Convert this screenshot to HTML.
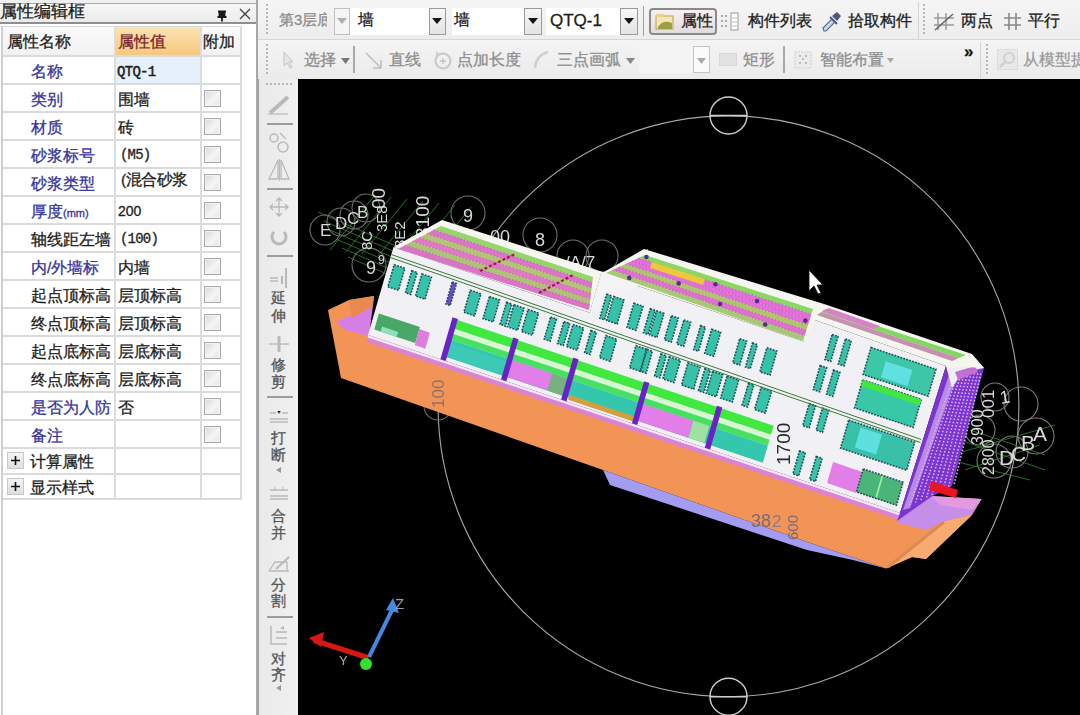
<!DOCTYPE html><html><head><meta charset="utf-8"><style>
*{box-sizing:border-box;margin:0;padding:0}
html,body{width:1080px;height:715px;overflow:hidden;background:#efefef;font-family:"Liberation Sans",sans-serif;}
.a{position:absolute}
.t{position:absolute;white-space:nowrap;line-height:1;-webkit-text-stroke:0.3px currentColor}
.cb{position:absolute;width:17px;height:17px;border:1px solid #a9a9a9;background:linear-gradient(135deg,#d6d6d6,#f6f6f6 55%,#e2e2e2);box-shadow:inset 0 0 0 1px #f2f2f2}
</style></head><body>
<div class="a" style="left:0;top:0;width:258px;height:715px;background:#fff"></div>
<div class="a" style="left:0;top:0;width:258px;height:4px;background:#f0f0f0"></div>
<div class="a" style="left:0;top:3px;width:258px;height:21px;background:linear-gradient(#f7f7f7,#ebebeb);border-top:1px solid #a8a8a8;border-bottom:2px solid #8e8e8e;border-right:1px solid #9a9a9a;border-radius:0 2px 0 0"></div>
<div class="t" style="left:0px;top:4px;font-size:16.8px;color:#1c1c1c">属性编辑框</div>
<svg class="a" style="left:216px;top:9px" width="12" height="13"><path d="M2 2.5h8M3.5 2.5v5.5M8.5 2.5v5.5M1.5 8h9M6 8v4.5" stroke="#1a1a1a" stroke-width="1.8" fill="none"/><rect x="4" y="3" width="4" height="5" fill="#1a1a1a"/></svg>
<svg class="a" style="left:238px;top:7px" width="14" height="14"><path d="M2 2L12 12M12 2L2 12" stroke="#444" stroke-width="1.4"/></svg>
<div class="a" style="left:256px;top:0;width:2px;height:715px;background:#a7a7a7"></div>
<div class="a" style="left:1px;top:26px;width:2px;height:689px;background:#cfcfcf"></div>
<div class="a" style="left:3px;top:26px;width:239px;height:31px;background:linear-gradient(#fafafa,#f1f1f1)"></div>
<div class="a" style="left:115px;top:27px;width:86px;height:29px;background:linear-gradient(#fbe3b0,#f6c77e)"></div>
<div class="t" style="left:7px;top:34px;font-size:15.5px;color:#1e1e1e">属性名称</div>
<div class="t" style="left:118px;top:34px;font-size:15.5px;color:#7a1f2e">属性值</div>
<div class="t" style="left:203px;top:34px;font-size:15.5px;color:#1e1e1e">附加</div>
<div class="a" style="left:3px;top:26px;width:239px;height:1px;background:#d8d8d8"></div>
<div class="a" style="left:115px;top:57px;width:86px;height:27px;background:#e5f0fa"></div>
<div class="t" style="left:31px;top:64px;font-size:15.5px;color:#35349b">名称</div>
<div class="t" style="left:117px;top:65px;font-family:'Liberation Mono',monospace;font-size:14px;color:#1e1e1e;letter-spacing:-0.7px;-webkit-text-stroke:0.5px #1e1e1e">QTQ-1</div>
<div class="t" style="left:31px;top:92px;font-size:15.5px;color:#35349b">类别</div>
<div class="t" style="left:118px;top:92px;font-size:15.5px;color:#1e1e1e">围墙</div>
<div class="cb" style="left:204px;top:90px"></div>
<div class="t" style="left:31px;top:120px;font-size:15.5px;color:#35349b">材质</div>
<div class="t" style="left:118px;top:120px;font-size:15.5px;color:#1e1e1e">砖</div>
<div class="cb" style="left:204px;top:118px"></div>
<div class="t" style="left:31px;top:148px;font-size:15.5px;color:#35349b">砂浆标号</div>
<div class="t" style="left:120px;top:148px;font-family:'Liberation Mono',monospace;font-size:14px;letter-spacing:-0.8px;color:#1e1e1e">(M5)</div>
<div class="cb" style="left:204px;top:146px"></div>
<div class="t" style="left:31px;top:176px;font-size:15.5px;color:#35349b">砂浆类型</div>
<div class="t" style="left:121px;top:172px;font-size:15.5px;color:#1e1e1e;letter-spacing:-0.5px">(混合砂浆</div>
<div class="cb" style="left:204px;top:174px"></div>
<div class="t" style="left:31px;top:204px;font-size:15.5px;color:#35349b">厚度<span style="font-size:11px">(mm)</span></div>
<div class="t" style="left:118px;top:204px;font-size:14px;color:#1e1e1e">200</div>
<div class="cb" style="left:204px;top:202px"></div>
<div class="t" style="left:31px;top:232px;font-size:15.5px;color:#1e1e1e">轴线距左墙</div>
<div class="t" style="left:120px;top:232px;font-family:'Liberation Mono',monospace;font-size:14px;letter-spacing:-0.8px;color:#1e1e1e">(100)</div>
<div class="cb" style="left:204px;top:230px"></div>
<div class="t" style="left:31px;top:260px;font-size:15.5px;color:#35349b">内/外墙标</div>
<div class="t" style="left:118px;top:260px;font-size:15.5px;color:#1e1e1e">内墙</div>
<div class="cb" style="left:204px;top:258px"></div>
<div class="t" style="left:31px;top:288px;font-size:15.5px;color:#1e1e1e">起点顶标高</div>
<div class="t" style="left:118px;top:288px;font-size:15.5px;color:#1e1e1e">层顶标高</div>
<div class="cb" style="left:204px;top:286px"></div>
<div class="t" style="left:31px;top:316px;font-size:15.5px;color:#1e1e1e">终点顶标高</div>
<div class="t" style="left:118px;top:316px;font-size:15.5px;color:#1e1e1e">层顶标高</div>
<div class="cb" style="left:204px;top:314px"></div>
<div class="t" style="left:31px;top:344px;font-size:15.5px;color:#1e1e1e">起点底标高</div>
<div class="t" style="left:118px;top:344px;font-size:15.5px;color:#1e1e1e">层底标高</div>
<div class="cb" style="left:204px;top:342px"></div>
<div class="t" style="left:31px;top:372px;font-size:15.5px;color:#1e1e1e">终点底标高</div>
<div class="t" style="left:118px;top:372px;font-size:15.5px;color:#1e1e1e">层底标高</div>
<div class="cb" style="left:204px;top:370px"></div>
<div class="t" style="left:31px;top:400px;font-size:15.5px;color:#35349b">是否为人防</div>
<div class="t" style="left:118px;top:400px;font-size:15.5px;color:#1e1e1e">否</div>
<div class="cb" style="left:204px;top:398px"></div>
<div class="t" style="left:31px;top:428px;font-size:15.5px;color:#35349b">备注</div>
<div class="t" style="left:118px;top:428px;font-size:15.5px;color:#1e1e1e"></div>
<div class="cb" style="left:204px;top:426px"></div>
<div class="a" style="left:7px;top:452px;width:17px;height:17px;border:1px solid #c8c8c8;background:linear-gradient(#f4f4f4,#dedede)"></div>
<svg class="a" style="left:9px;top:454px" width="13" height="13"><path d="M6.5 2v9M2 6.5h9" stroke="#111" stroke-width="1.6"/></svg>
<div class="t" style="left:30px;top:454px;font-size:15.5px;color:#1e1e1e">计算属性</div>
<div class="a" style="left:7px;top:477.5px;width:17px;height:17px;border:1px solid #c8c8c8;background:linear-gradient(#f4f4f4,#dedede)"></div>
<svg class="a" style="left:9px;top:479.5px" width="13" height="13"><path d="M6.5 2v9M2 6.5h9" stroke="#111" stroke-width="1.6"/></svg>
<div class="t" style="left:30px;top:479.5px;font-size:15.5px;color:#1e1e1e">显示样式</div>
<div class="a" style="left:3px;top:55px;width:239px;height:2px;background:#dadada"></div>
<div class="a" style="left:3px;top:83px;width:239px;height:2px;background:#dadada"></div>
<div class="a" style="left:3px;top:111px;width:239px;height:2px;background:#dadada"></div>
<div class="a" style="left:3px;top:139px;width:239px;height:2px;background:#dadada"></div>
<div class="a" style="left:3px;top:167px;width:239px;height:2px;background:#dadada"></div>
<div class="a" style="left:3px;top:195px;width:239px;height:2px;background:#dadada"></div>
<div class="a" style="left:3px;top:223px;width:239px;height:2px;background:#dadada"></div>
<div class="a" style="left:3px;top:251px;width:239px;height:2px;background:#dadada"></div>
<div class="a" style="left:3px;top:279px;width:239px;height:2px;background:#dadada"></div>
<div class="a" style="left:3px;top:307px;width:239px;height:2px;background:#dadada"></div>
<div class="a" style="left:3px;top:335px;width:239px;height:2px;background:#dadada"></div>
<div class="a" style="left:3px;top:363px;width:239px;height:2px;background:#dadada"></div>
<div class="a" style="left:3px;top:391px;width:239px;height:2px;background:#dadada"></div>
<div class="a" style="left:3px;top:419px;width:239px;height:2px;background:#dadada"></div>
<div class="a" style="left:3px;top:447px;width:239px;height:2px;background:#dadada"></div>
<div class="a" style="left:3px;top:472.5px;width:239px;height:2px;background:#dadada"></div>
<div class="a" style="left:3px;top:498.0px;width:239px;height:2px;background:#dadada"></div>
<div class="a" style="left:114px;top:26px;width:2px;height:473px;background:#dcdcdc"></div>
<div class="a" style="left:200px;top:26px;width:2px;height:473px;background:#dcdcdc"></div>
<div class="a" style="left:240px;top:26px;width:2px;height:473px;background:#dcdcdc"></div>
<div class="a" style="left:258px;top:0;width:822px;height:40px;background:linear-gradient(#f5f5f5,#ededed)"></div>
<div class="a" style="left:258px;top:39px;width:822px;height:1px;background:#d6d6d6"></div>
<div class="a" style="left:258px;top:40px;width:822px;height:39px;background:linear-gradient(#f4f4f4,#ebebeb)"></div>
<div class="a" style="left:266px;top:4px;width:2px;height:2px;background:#b8b8b8"></div><div class="a" style="left:266px;top:8px;width:2px;height:2px;background:#b8b8b8"></div><div class="a" style="left:266px;top:12px;width:2px;height:2px;background:#b8b8b8"></div><div class="a" style="left:266px;top:16px;width:2px;height:2px;background:#b8b8b8"></div><div class="a" style="left:266px;top:20px;width:2px;height:2px;background:#b8b8b8"></div><div class="a" style="left:266px;top:24px;width:2px;height:2px;background:#b8b8b8"></div><div class="a" style="left:266px;top:28px;width:2px;height:2px;background:#b8b8b8"></div><div class="a" style="left:266px;top:32px;width:2px;height:2px;background:#b8b8b8"></div>
<div class="a" style="left:266px;top:44px;width:2px;height:2px;background:#b8b8b8"></div><div class="a" style="left:266px;top:48px;width:2px;height:2px;background:#b8b8b8"></div><div class="a" style="left:266px;top:52px;width:2px;height:2px;background:#b8b8b8"></div><div class="a" style="left:266px;top:56px;width:2px;height:2px;background:#b8b8b8"></div><div class="a" style="left:266px;top:60px;width:2px;height:2px;background:#b8b8b8"></div><div class="a" style="left:266px;top:64px;width:2px;height:2px;background:#b8b8b8"></div><div class="a" style="left:266px;top:68px;width:2px;height:2px;background:#b8b8b8"></div><div class="a" style="left:266px;top:72px;width:2px;height:2px;background:#b8b8b8"></div>
<div class="a" style="left:923px;top:4px;width:2px;height:2px;background:#b8b8b8"></div><div class="a" style="left:923px;top:8px;width:2px;height:2px;background:#b8b8b8"></div><div class="a" style="left:923px;top:12px;width:2px;height:2px;background:#b8b8b8"></div><div class="a" style="left:923px;top:16px;width:2px;height:2px;background:#b8b8b8"></div><div class="a" style="left:923px;top:20px;width:2px;height:2px;background:#b8b8b8"></div><div class="a" style="left:923px;top:24px;width:2px;height:2px;background:#b8b8b8"></div><div class="a" style="left:923px;top:28px;width:2px;height:2px;background:#b8b8b8"></div><div class="a" style="left:923px;top:32px;width:2px;height:2px;background:#b8b8b8"></div>
<div class="a" style="left:986px;top:44px;width:2px;height:2px;background:#b8b8b8"></div><div class="a" style="left:986px;top:48px;width:2px;height:2px;background:#b8b8b8"></div><div class="a" style="left:986px;top:52px;width:2px;height:2px;background:#b8b8b8"></div><div class="a" style="left:986px;top:56px;width:2px;height:2px;background:#b8b8b8"></div><div class="a" style="left:986px;top:60px;width:2px;height:2px;background:#b8b8b8"></div><div class="a" style="left:986px;top:64px;width:2px;height:2px;background:#b8b8b8"></div><div class="a" style="left:986px;top:68px;width:2px;height:2px;background:#b8b8b8"></div><div class="a" style="left:986px;top:72px;width:2px;height:2px;background:#b8b8b8"></div>
<div class="t" style="left:279px;top:12px;font-size:15px;color:#8c8c8c">第3层底</div>
<div class="a" style="left:327px;top:8px;width:6px;height:26px;background:linear-gradient(#f3f3f3,#ececec)"></div>
<div class="a" style="left:334px;top:8px;width:16px;height:27px;border:1px solid #c0c0c0;background:#f4f4f4"></div>
<svg class="a" style="left:337px;top:18px" width="10" height="6"><path d="M0 0h10L5 6z" fill="#b0b0b0"/></svg>
<div class="a" style="left:350px;top:8px;width:80px;height:27px;background:#fff"></div>
<div class="t" style="left:358px;top:12px;font-size:15.5px;color:#1c1c1c">墙</div>
<div class="a" style="left:429px;top:8px;width:17px;height:27px;border:1px solid #9a9a9a;background:linear-gradient(#f7f7f7,#e3e3e3)"></div>
<svg class="a" style="left:432px;top:18px" width="10" height="6"><path d="M0 0h10L5 6z" fill="#111"/></svg>
<div class="a" style="left:452px;top:8px;width:73px;height:27px;background:#fff"></div>
<div class="t" style="left:454px;top:12px;font-size:15.5px;color:#1c1c1c">墙</div>
<div class="a" style="left:524px;top:8px;width:18px;height:27px;border:1px solid #9a9a9a;background:linear-gradient(#f7f7f7,#e3e3e3)"></div>
<svg class="a" style="left:528px;top:18px" width="10" height="6"><path d="M0 0h10L5 6z" fill="#111"/></svg>
<div class="a" style="left:546px;top:8px;width:75px;height:27px;background:#fff"></div>
<div class="t" style="left:550px;top:12px;font-size:17px;color:#1c1c1c">QTQ-1</div>
<div class="a" style="left:620px;top:8px;width:18px;height:27px;border:1px solid #9a9a9a;background:linear-gradient(#f7f7f7,#e3e3e3)"></div>
<svg class="a" style="left:624px;top:18px" width="10" height="6"><path d="M0 0h10L5 6z" fill="#111"/></svg>
<div class="a" style="left:643px;top:6px;width:1px;height:30px;background:#a0a0a0"></div>
<div class="a" style="left:649px;top:8px;width:68px;height:27px;border:2px solid #8a8a8a;border-radius:4px;background:linear-gradient(#f6f0f0,#e2dcdc)"></div>
<svg class="a" style="left:655px;top:13px" width="20" height="18"><rect x="1" y="3" width="17" height="13" fill="#f3e6b0" stroke="#b8a060"/><path d="M3 14 Q8 6 17 10 L17 16 L3 16z" fill="#9aa040"/><rect x="1" y="1" width="8" height="3" fill="#e8d090"/></svg>
<div class="t" style="left:681px;top:13px;font-size:15.5px;color:#1c1c1c">属性</div>
<svg class="a" style="left:720px;top:12px" width="20" height="20"><g fill="#aaa"><rect x="1" y="3" width="2" height="2"/><rect x="1" y="8" width="2" height="2"/><rect x="1" y="13" width="2" height="2"/><rect x="5" y="3" width="2" height="2"/><rect x="5" y="8" width="2" height="2"/><rect x="5" y="13" width="2" height="2"/></g><rect x="11" y="1" width="7" height="17" fill="#fff" stroke="#999"/><path d="M12 6h5M12 10h5M12 14h5" stroke="#bbb"/></svg>
<div class="t" style="left:748px;top:13px;font-size:15.5px;color:#1c1c1c">构件列表</div>
<svg class="a" style="left:821px;top:11px" width="21" height="22"><path d="M3 20 L2 17 L11 8 L14 11 L5 20z" fill="#c8dcf0" stroke="#5a6e90" stroke-width="1.2"/><path d="M11 5 L16 1 L20 5 L16 10z" fill="#4a5a7a"/><path d="M9 6l7 7" stroke="#4a5a7a" stroke-width="2"/></svg>
<div class="t" style="left:848px;top:13px;font-size:15.5px;color:#1c1c1c">拾取构件</div>
<div class="a" style="left:918px;top:2px;width:1px;height:37px;background:#d4d4d4"></div>
<svg class="a" style="left:933px;top:12px" width="22" height="19"><path d="M5 1v17M13 1v17M1 6h20M1 13h20" stroke="#999" stroke-width="1.5"/><path d="M2 18 L20 2" stroke="#666" stroke-width="1.5"/></svg>
<div class="t" style="left:961px;top:13px;font-size:15.5px;color:#1c1c1c">两点</div>
<svg class="a" style="left:1003px;top:12px" width="19" height="19"><path d="M6 1v17M13 1v17M1 6h17M1 13h17" stroke="#888" stroke-width="1.6"/></svg>
<div class="t" style="left:1028px;top:13px;font-size:15.5px;color:#1c1c1c">平行</div>
<svg class="a" style="left:282px;top:51px" width="12" height="18"><path d="M2 1 L2 15 L5 12 L8 17 L10 16 L7 11 L11 11z" fill="#e4e4e4" stroke="#c4c4c4"/></svg>
<div class="t" style="left:304px;top:52px;font-size:15.5px;color:#8e8e8e">选择</div>
<svg class="a" style="left:341px;top:58px" width="10" height="6"><path d="M0 0h9L4.5 6z" fill="#777"/></svg>
<div class="a" style="left:353px;top:46px;width:2px;height:27px;background:#a9a9a9"></div>
<svg class="a" style="left:364px;top:51px" width="20" height="19"><path d="M2 2 L17 17 M17 9 L17 17 L9 17" stroke="#bdbdbd" stroke-width="1.5" fill="none"/></svg>
<div class="t" style="left:389px;top:52px;font-size:15.5px;color:#8e8e8e">直线</div>
<svg class="a" style="left:432px;top:49px" width="21" height="21"><circle cx="11" cy="12" r="7.5" stroke="#c8c8c8" stroke-width="2" fill="none"/><path d="M11 9v6M8 12h6" stroke="#c0c0c0" stroke-width="1.3"/><path d="M4 2 L9 6 L4 8z" fill="#cfcfcf"/></svg>
<div class="t" style="left:457px;top:52px;font-size:15.5px;color:#8e8e8e">点加长度</div>
<svg class="a" style="left:532px;top:49px" width="18" height="20"><path d="M3 19 Q4 6 16 3" stroke="#cfcfcf" stroke-width="2.5" fill="none"/></svg>
<div class="t" style="left:557px;top:52px;font-size:15.5px;color:#8e8e8e">三点画弧</div>
<svg class="a" style="left:626px;top:58px" width="10" height="6"><path d="M0 0h9L4.5 6z" fill="#888"/></svg>
<div class="a" style="left:639px;top:46px;width:54px;height:27px;background:#f4f4f4"></div>
<div class="a" style="left:693px;top:46px;width:17px;height:27px;border:1px solid #c4c4c4;background:#fafafa"></div>
<svg class="a" style="left:697px;top:58px" width="10" height="6"><path d="M0 0h9L4.5 6z" fill="#aaa"/></svg>
<div class="a" style="left:719px;top:53px;width:18px;height:13px;background:#e2e2e2;border:1px solid #d8d8d8"></div>
<div class="t" style="left:743px;top:52px;font-size:15.5px;color:#8e8e8e">矩形</div>
<div class="a" style="left:783px;top:46px;width:2px;height:27px;background:#a9a9a9"></div>
<svg class="a" style="left:794px;top:51px" width="18" height="18"><rect x="1" y="1" width="16" height="16" fill="#ececec" stroke="#cfcfcf" stroke-dasharray="2 1"/><path d="M5 5h2M11 5h2M5 12h2M11 12h2M8 8h2" stroke="#bbb" stroke-width="2"/></svg>
<div class="t" style="left:820px;top:52px;font-size:15.5px;color:#8e8e8e">智能布置</div>
<svg class="a" style="left:887px;top:58px" width="8" height="5"><path d="M0 0h7L3.5 5z" fill="#aaa"/></svg>
<div class="t" style="left:964px;top:43px;font-size:17px;font-weight:bold;color:#111">»</div>
<div class="a" style="left:980px;top:42px;width:1px;height:36px;background:#d4d4d4"></div>
<svg class="a" style="left:997px;top:49px" width="21" height="21"><rect x="0.5" y="0.5" width="20" height="20" fill="#e8e8e8" stroke="#dcdcdc"/><circle cx="12" cy="9" r="5" stroke="#d0d0d0" stroke-width="2" fill="none"/><path d="M8 13 L3 18" stroke="#d0d0d0" stroke-width="2.5"/></svg>
<div class="t" style="left:1023px;top:52px;font-size:15.5px;color:#9a9a9a">从模型提</div>
<div class="a" style="left:258px;top:79px;width:40px;height:636px;background:linear-gradient(90deg,#e9e9e9,#f0f0f0)"></div>
<div class="a" style="left:258px;top:79px;width:1px;height:636px;background:#9c9c9c"></div>
<div class="a" style="left:266px;top:83px;width:2px;height:2px;background:#b8b8b8"></div><div class="a" style="left:270px;top:83px;width:2px;height:2px;background:#b8b8b8"></div><div class="a" style="left:274px;top:83px;width:2px;height:2px;background:#b8b8b8"></div><div class="a" style="left:278px;top:83px;width:2px;height:2px;background:#b8b8b8"></div><div class="a" style="left:282px;top:83px;width:2px;height:2px;background:#b8b8b8"></div><div class="a" style="left:286px;top:83px;width:2px;height:2px;background:#b8b8b8"></div><div class="a" style="left:290px;top:83px;width:2px;height:2px;background:#b8b8b8"></div>
<div class="a" style="left:267px;top:123px;width:26px;height:2px;background:#9c9c9c"></div>
<div class="a" style="left:267px;top:188px;width:26px;height:2px;background:#9c9c9c"></div>
<div class="a" style="left:267px;top:255px;width:26px;height:2px;background:#9c9c9c"></div>
<div class="a" style="left:267px;top:396px;width:26px;height:2px;background:#9c9c9c"></div>
<div class="a" style="left:267px;top:616px;width:26px;height:2px;background:#9c9c9c"></div>
<svg class="a" style="left:266px;top:92px" width="26" height="24"><path d="M4 21 L22 5" stroke="#b9b9b9" stroke-width="4"/><path d="M2 22h20" stroke="#b9b9b9" stroke-width="1.2"/></svg>
<svg class="a" style="left:266px;top:130px" width="26" height="24"><circle cx="8" cy="8" r="4" stroke="#b9b9b9" stroke-width="1.5" fill="none"/><circle cx="17" cy="17" r="5" stroke="#b9b9b9" stroke-width="1.5" fill="none"/><path d="M14 3 L20 9" stroke="#b9b9b9" stroke-width="1.2"/></svg>
<svg class="a" style="left:266px;top:158px" width="26" height="24"><path d="M12 2 L3 21 L12 21z M15 2 L23 21 L15 21z" stroke="#b9b9b9" stroke-width="1.3" fill="none"/><path d="M13.5 1v22" stroke="#b9b9b9"/></svg>
<svg class="a" style="left:268px;top:197px" width="22" height="20"><path d="M11 1v18M2 10h18M8 4l3-3 3 3M8 16l3 3 3-3M5 7l-3 3 3 3M17 7l3 3-3 3" stroke="#b9b9b9" stroke-width="1.3" fill="none"/></svg>
<svg class="a" style="left:268px;top:227px" width="22" height="20"><path d="M6 5 A7 7 0 1 0 16 5" stroke="#b9b9b9" stroke-width="3" fill="none"/></svg>
<svg class="a" style="left:267px;top:266px" width="24" height="22"><path d="M3 12h8M3 15h8" stroke="#b9b9b9" stroke-width="1.4"/><path d="M15 10v8M19 2v20" stroke="#b9b9b9" stroke-width="2"/></svg>
<div class="t" style="left:271px;top:290px;font-size:15px;color:#555">延</div>
<div class="t" style="left:271px;top:308px;font-size:15px;color:#555">伸</div>
<svg class="a" style="left:267px;top:335px" width="24" height="18"><path d="M2 9h20" stroke="#b9b9b9" stroke-width="1.4"/><path d="M12 1v16" stroke="#b9b9b9" stroke-width="3"/></svg>
<div class="t" style="left:271px;top:357px;font-size:15px;color:#555">修</div>
<div class="t" style="left:271px;top:374px;font-size:15px;color:#555">剪</div>
<svg class="a" style="left:267px;top:407px" width="24" height="18"><path d="M3 6h6M15 6h6M3 12h18M3 15h18" stroke="#b9b9b9" stroke-width="1.5"/><path d="M10 4 L12 7 L14 4" stroke="#b9b9b9"/></svg>
<div class="t" style="left:271px;top:430px;font-size:15px;color:#555">打</div>
<div class="t" style="left:271px;top:447px;font-size:15px;color:#555">断</div>
<svg class="a" style="left:276px;top:467px" width="6" height="6"><path d="M5 0v6L0 3z" fill="#999"/></svg>
<svg class="a" style="left:267px;top:485px" width="24" height="18"><path d="M3 5h18M3 11h18M3 14h18" stroke="#b9b9b9" stroke-width="1.5"/><path d="M8 2v4M16 2v4" stroke="#b9b9b9"/></svg>
<div class="t" style="left:271px;top:508px;font-size:15px;color:#555">合</div>
<div class="t" style="left:271px;top:525px;font-size:15px;color:#555">并</div>
<svg class="a" style="left:266px;top:554px" width="26" height="20"><path d="M3 17 L9 8 L21 8 L21 17 M3 17h20" stroke="#b9b9b9" stroke-width="1.3" fill="none"/><path d="M10 15 L23 3" stroke="#b9b9b9" stroke-width="2"/></svg>
<div class="t" style="left:271px;top:577px;font-size:15px;color:#555">分</div>
<div class="t" style="left:271px;top:593px;font-size:15px;color:#555">割</div>
<svg class="a" style="left:267px;top:624px" width="24" height="22"><path d="M4 2v18h16M9 8h11M9 14h11" stroke="#b9b9b9" stroke-width="1.5" fill="none"/><path d="M13 4 L17 2 L17 6z" fill="#b9b9b9"/></svg>
<div class="t" style="left:271px;top:651px;font-size:15px;color:#555">对</div>
<div class="t" style="left:271px;top:667px;font-size:15px;color:#555">齐</div>
<svg class="a" style="left:276px;top:685px" width="6" height="6"><path d="M5 0v6L0 3z" fill="#999"/></svg>
<div class="a" style="left:298px;top:79px;width:782px;height:636px;background:#000"></div>
<svg class="a" style="left:0;top:0" width="1080" height="715"><defs><clipPath id="cv"><rect x="298" y="79" width="782" height="636"/></clipPath></defs><filter id="bl"><feGaussianBlur stdDeviation="0.45"/></filter><g clip-path="url(#cv)"><g filter="url(#bl)"><circle cx="728.5" cy="406.3" r="290.4" stroke="#a8a8a8" stroke-width="1.1" fill="none"/><circle cx="728.5" cy="115.5" r="18.5" stroke="#cfcfcf" stroke-width="1.4" fill="none"/><line x1="710" y1="115.5" x2="747" y2="115.5" stroke="#cfcfcf" stroke-width="1.4"/><circle cx="728.5" cy="696.7" r="18.5" stroke="#cfcfcf" stroke-width="1.4" fill="none"/><line x1="710" y1="696.7" x2="747" y2="696.7" stroke="#cfcfcf" stroke-width="1.4"/><line x1="318" y1="212" x2="428" y2="260" stroke="#2c7a2c" stroke-width="0.9" fill="none"/><line x1="324" y1="221" x2="434" y2="269" stroke="#2c7a2c" stroke-width="0.9" fill="none"/><line x1="330" y1="230" x2="440" y2="278" stroke="#2c7a2c" stroke-width="0.9" fill="none"/><line x1="336" y1="239" x2="446" y2="287" stroke="#2c7a2c" stroke-width="0.9" fill="none"/><line x1="342" y1="248" x2="452" y2="296" stroke="#2c7a2c" stroke-width="0.9" fill="none"/><line x1="348" y1="257" x2="458" y2="305" stroke="#2c7a2c" stroke-width="0.9" fill="none"/><line x1="330" y1="250" x2="375" y2="195" stroke="#2c7a2c" stroke-width="0.9" fill="none"/><line x1="346" y1="252" x2="391" y2="197" stroke="#2c7a2c" stroke-width="0.9" fill="none"/><line x1="362" y1="254" x2="407" y2="199" stroke="#2c7a2c" stroke-width="0.9" fill="none"/><line x1="378" y1="256" x2="423" y2="201" stroke="#2c7a2c" stroke-width="0.9" fill="none"/><line x1="394" y1="258" x2="439" y2="203" stroke="#2c7a2c" stroke-width="0.9" fill="none"/><line x1="410" y1="260" x2="455" y2="205" stroke="#2c7a2c" stroke-width="0.9" fill="none"/><line x1="426" y1="262" x2="471" y2="207" stroke="#2c7a2c" stroke-width="0.9" fill="none"/><circle cx="325" cy="230" r="15" stroke="#6e6e6e" stroke-width="1.1" fill="none"/><circle cx="341" cy="222" r="14" stroke="#6e6e6e" stroke-width="1.1" fill="none"/><circle cx="354" cy="215" r="14" stroke="#6e6e6e" stroke-width="1.1" fill="none"/><circle cx="366" cy="208" r="14" stroke="#6e6e6e" stroke-width="1.1" fill="none"/><circle cx="369" cy="265" r="17" stroke="#6e6e6e" stroke-width="1.1" fill="none"/><circle cx="468" cy="213" r="17" stroke="#6e6e6e" stroke-width="1.1" fill="none"/><circle cx="540" cy="235" r="17" stroke="#6e6e6e" stroke-width="1.1" fill="none"/><circle cx="573" cy="256" r="16" stroke="#6e6e6e" stroke-width="1.1" fill="none"/><circle cx="602" cy="256" r="16" stroke="#6e6e6e" stroke-width="1.1" fill="none"/><circle cx="438" cy="406" r="14" stroke="#6e6e6e" stroke-width="1.1" fill="none"/><text x="320" y="236" font-size="17" font-family="Liberation Sans" fill="#d8d8d8">E</text><text x="335" y="229" font-size="17" font-family="Liberation Sans" fill="#d8d8d8">D</text><text x="347" y="224" font-size="17" font-family="Liberation Sans" fill="#d8d8d8">C</text><text x="357" y="218" font-size="17" font-family="Liberation Sans" fill="#d8d8d8">B</text><text x="0" y="0" font-size="19" font-family="Liberation Sans" fill="#d8d8d8" transform="translate(385,209) rotate(-90)">00</text><text x="0" y="0" font-size="15" font-family="Liberation Sans" fill="#d8d8d8" transform="translate(387,232) rotate(-90)">3E8</text><text x="0" y="0" font-size="15" font-family="Liberation Sans" fill="#d8d8d8" transform="translate(372,250) rotate(-90)">8C</text><text x="0" y="0" font-size="19" font-family="Liberation Sans" fill="#d8d8d8" transform="translate(429,238) rotate(-90)">3100</text><text x="0" y="0" font-size="15" font-family="Liberation Sans" fill="#d8d8d8" transform="translate(405,248) rotate(-90)">3E2</text><text x="366" y="274" font-size="18" font-family="Liberation Sans" fill="#d8d8d8">9</text><text x="378" y="264" font-size="12" font-family="Liberation Sans" fill="#d8d8d8">9</text><text x="463" y="222" font-size="18" font-family="Liberation Sans" fill="#d8d8d8">9</text><text x="490" y="243" font-size="18" font-family="Liberation Sans" fill="#d8d8d8">00</text><text x="535" y="246" font-size="18" font-family="Liberation Sans" fill="#d8d8d8">8</text><text x="565" y="268" font-size="17" font-family="Liberation Sans" fill="#d8d8d8">/A/7</text><circle cx="995" cy="397" r="14" stroke="#7a7a7a" stroke-width="1.1" fill="none"/><circle cx="1021" cy="404" r="17" stroke="#7a7a7a" stroke-width="1.1" fill="none"/><circle cx="1036" cy="436" r="18" stroke="#7a7a7a" stroke-width="1.1" fill="none"/><circle cx="994" cy="461" r="17" stroke="#7a7a7a" stroke-width="1.1" fill="none"/><circle cx="1012" cy="452" r="16" stroke="#7a7a7a" stroke-width="1.1" fill="none"/><circle cx="980" cy="430" r="15" stroke="#7a7a7a" stroke-width="1.1" fill="none"/><line x1="960" y1="440" x2="1045" y2="470" stroke="#2c7a2c" stroke-width="0.9" fill="none"/><line x1="962" y1="452" x2="1055" y2="425" stroke="#2c7a2c" stroke-width="0.9" fill="none"/><line x1="965" y1="470" x2="1040" y2="445" stroke="#2c7a2c" stroke-width="0.9" fill="none"/><line x1="970" y1="430" x2="1045" y2="455" stroke="#2c7a2c" stroke-width="0.9" fill="none"/><line x1="958" y1="462" x2="1030" y2="480" stroke="#2c7a2c" stroke-width="0.9" fill="none"/><text x="0" y="0" font-size="18" font-family="Liberation Sans" fill="#d8d8d8" transform="translate(1001,404) rotate(-10)">1</text><text x="0" y="0" font-size="17" font-family="Liberation Sans" fill="#d8d8d8" transform="translate(994,418) rotate(-90)">001</text><text x="0" y="0" font-size="16" font-family="Liberation Sans" fill="#d8d8d8" transform="translate(983,445) rotate(-90)">3900</text><text x="0" y="0" font-size="16" font-family="Liberation Sans" fill="#d8d8d8" transform="translate(994,475) rotate(-90)">2800</text><text x="999" y="465" font-size="21" font-family="Liberation Sans" fill="#d8d8d8">D</text><text x="1011" y="461" font-size="21" font-family="Liberation Sans" fill="#d8d8d8">C</text><text x="1021" y="450" font-size="21" font-family="Liberation Sans" fill="#d8d8d8">B</text><text x="1033" y="441" font-size="21" font-family="Liberation Sans" fill="#d8d8d8">A</text><polygon points="328.0,310.0 349.0,300.0 374.0,296.0 368.0,335.0 898.0,518.0 981.5,499.0 972.0,515.0 926.0,559.0 912.0,557.0 886.0,568.5 810.0,543.0 603.0,470.0 341.0,378.0" fill="#f19455" /><polygon points="603.0,470.0 810.0,543.0 886.0,568.5 853.0,560.0 807.0,550.0 610.0,485.0" fill="#a49cf0" /><polygon points="336.0,322.0 373.0,305.0 369.0,336.0 345.0,330.0" fill="#d67ee6" /><polygon points="349.0,300.0 374.0,296.0 373.0,306.0 352.0,318.0" fill="#e88a50" /><polygon points="944.6,521.0 972.0,515.0 926.0,559.0 912.0,557.0 886.0,568.5" fill="#f7ab70" /><line x1="944" y1="522" x2="888" y2="567" stroke="#dc8a55" stroke-width="3"/><polygon points="898.0,518.0 931.0,496.0 981.5,499.0 972.0,514.6 944.6,521.0 926.0,530.0 898.0,523.0" fill="#c58ee8" /><polygon points="931.0,496.0 981.5,499.0 972.0,510.0 940.0,505.0" fill="#e49ae0" /><polygon points="393.5,247.0 589.8,312.7 601.1,273.7 803.8,341.5 810.5,318.5 946.0,366.0 900.0,513.0 368.0,335.0" fill="#f1f0f4" /><polygon points="601.1,273.7 648.0,249.0 636.6,287.7 589.8,312.7" fill="#f3f3f6" /><polygon points="368.0,335.0 900.0,513.0 899.0,520.0 367.0,342.0" fill="#d883d6" /><polygon points="368.0,335.0 900.0,513.0 899.7,515.5 367.7,337.5" fill="#f6e6f4" /><polygon points="946.0,366.0 984.0,368.0 952.0,486.0 931.0,497.0 897.0,521.0 900.0,513.0" fill="#7d34d0" /><polygon points="950.0,372.0 958.0,372.0 910.0,508.0 903.0,510.0" fill="#b88ae6" /><line x1="955.0" y1="372.0" x2="910.0" y2="505.0" stroke="#d6b0f0" stroke-width="1.6" stroke-dasharray="1.6 1.8"/><line x1="958.2" y1="372.2" x2="915.5" y2="502.5" stroke="#d6b0f0" stroke-width="1.6" stroke-dasharray="1.6 1.8"/><line x1="961.5" y1="372.4" x2="921.0" y2="500.0" stroke="#d6b0f0" stroke-width="1.6" stroke-dasharray="1.6 1.8"/><line x1="964.8" y1="372.6" x2="926.5" y2="497.5" stroke="#d6b0f0" stroke-width="1.6" stroke-dasharray="1.6 1.8"/><line x1="968.0" y1="372.8" x2="932.0" y2="495.0" stroke="#d6b0f0" stroke-width="1.6" stroke-dasharray="1.6 1.8"/><line x1="971.2" y1="372.9" x2="937.5" y2="492.5" stroke="#d6b0f0" stroke-width="1.6" stroke-dasharray="1.6 1.8"/><line x1="974.5" y1="373.1" x2="943.0" y2="490.0" stroke="#d6b0f0" stroke-width="1.6" stroke-dasharray="1.6 1.8"/><line x1="977.8" y1="373.3" x2="948.5" y2="487.5" stroke="#d6b0f0" stroke-width="1.6" stroke-dasharray="1.6 1.8"/><line x1="981.0" y1="373.5" x2="954.0" y2="485.0" stroke="#d6b0f0" stroke-width="1.6" stroke-dasharray="1.6 1.8"/><polygon points="946.0,366.0 971.0,354.0 984.0,368.0 962.0,373.0 952.0,388.0" fill="#f0eef4" /><polygon points="955.0,372.0 975.0,366.0 978.0,372.0 958.0,380.0" fill="#c070d0" /><polygon points="931.0,481.0 958.0,490.0 956.0,498.0 929.0,490.0" fill="#e81424" /><polygon points="393.5,247.0 442.0,220.0 606.0,273.0 601.1,273.7 589.8,312.7" fill="#f4f6ef" /><polygon points="441.0,226.0 593.0,277.0 592.3,282.5 433.8,229.8" fill="#96d46c" /><polygon points="433.8,229.8 592.3,282.5 591.7,288.0 426.7,233.7" fill="#dc74c8" /><polygon points="426.7,233.7 591.7,288.0 591.0,293.5 419.5,237.5" fill="#b4c474" /><polygon points="419.5,237.5 591.0,293.5 590.3,299.0 412.3,241.3" fill="#e078c8" /><polygon points="412.3,241.3 590.3,299.0 589.7,304.5 405.2,245.2" fill="#b0c078" /><polygon points="405.2,245.2 589.7,304.5 589.0,310.0 398.0,249.0" fill="#d874c4" /><line x1="433.8" y1="229.8" x2="592.3" y2="282.5" stroke="#7a3a70" stroke-width="0.8" stroke-dasharray="1.5 2" opacity="0.6"/><line x1="426.7" y1="233.7" x2="591.7" y2="288.0" stroke="#7a3a70" stroke-width="0.8" stroke-dasharray="1.5 2" opacity="0.6"/><line x1="419.5" y1="237.5" x2="591.0" y2="293.5" stroke="#7a3a70" stroke-width="0.8" stroke-dasharray="1.5 2" opacity="0.6"/><line x1="412.3" y1="241.3" x2="590.3" y2="299.0" stroke="#7a3a70" stroke-width="0.8" stroke-dasharray="1.5 2" opacity="0.6"/><line x1="405.2" y1="245.2" x2="589.7" y2="304.5" stroke="#7a3a70" stroke-width="0.8" stroke-dasharray="1.5 2" opacity="0.6"/><polyline points="480,271 515,254" stroke="#a01850" stroke-width="2.2" stroke-dasharray="3 2" fill="none"/><polyline points="539,293 573,275" stroke="#a01850" stroke-width="2.2" stroke-dasharray="3 2" fill="none"/><polygon points="601.1,273.7 644.0,249.0 824.0,304.0 803.8,341.5" fill="#f4f6ef" /><polygon points="645.0,255.0 813.0,309.0 811.3,314.3 638.5,258.0" fill="#8ad864" /><polygon points="638.5,258.0 811.3,314.3 809.7,319.7 632.0,261.0" fill="#e070d8" /><polygon points="632.0,261.0 809.7,319.7 808.0,325.0 625.5,264.0" fill="#e070d8" /><polygon points="625.5,264.0 808.0,325.0 806.3,330.3 619.0,267.0" fill="#b0c470" /><polygon points="619.0,267.0 806.3,330.3 804.7,335.7 612.5,270.0" fill="#e070d0" /><polygon points="612.5,270.0 804.7,335.7 803.0,341.0 606.0,273.0" fill="#a8c878" /><line x1="638.5" y1="258.0" x2="811.3" y2="314.3" stroke="#7a3a70" stroke-width="0.8" stroke-dasharray="1.5 2" opacity="0.6"/><line x1="632.0" y1="261.0" x2="809.7" y2="319.7" stroke="#7a3a70" stroke-width="0.8" stroke-dasharray="1.5 2" opacity="0.6"/><line x1="625.5" y1="264.0" x2="808.0" y2="325.0" stroke="#7a3a70" stroke-width="0.8" stroke-dasharray="1.5 2" opacity="0.6"/><line x1="619.0" y1="267.0" x2="806.3" y2="330.3" stroke="#7a3a70" stroke-width="0.8" stroke-dasharray="1.5 2" opacity="0.6"/><line x1="612.5" y1="270.0" x2="804.7" y2="335.7" stroke="#7a3a70" stroke-width="0.8" stroke-dasharray="1.5 2" opacity="0.6"/><polygon points="652.0,262.0 705.0,279.0 703.0,285.0 650.0,268.0" fill="#ecc83c" /><circle cx="646.4" cy="257.0" r="2.3" fill="#5a2a90"/><circle cx="678.7" cy="283.4" r="2.3" fill="#5a2a90"/><circle cx="715.4" cy="284.2" r="2.3" fill="#5a2a90"/><circle cx="720.1" cy="304.0" r="2.3" fill="#5a2a90"/><circle cx="757.0" cy="301.1" r="2.3" fill="#5a2a90"/><circle cx="765.2" cy="324.5" r="2.3" fill="#5a2a90"/><circle cx="805.4" cy="320.6" r="2.3" fill="#5a2a90"/><circle cx="629.3" cy="277.9" r="2.3" fill="#5a2a90"/><polygon points="810.5,318.5 824.0,304.0 972.0,354.0 984.0,368.0 946.0,366.0" fill="#f4f6ef" /><polygon points="826.0,309.0 966.0,355.0 959.0,358.0 821.5,312.0" fill="#80d860" /><polygon points="821.5,312.0 959.0,358.0 952.0,361.0 817.0,315.0" fill="#c890b0" /><polygon points="822.0,311.0 829.0,308.0 880.0,326.0 873.0,329.0" fill="#d880c8" /><polygon points="394.2,264.8 404.8,268.3 398.5,290.3 387.8,286.8" fill="#36c2a8" stroke="#1d4f58" stroke-width="1.6" stroke-dasharray="1.8 1.3"/><polygon points="411.8,270.7 417.1,272.4 410.7,294.4 405.4,292.7" fill="#36c2a8" stroke="#1d4f58" stroke-width="1.6" stroke-dasharray="1.8 1.3"/><polygon points="421.9,274.0 431.4,277.2 425.1,299.2 415.5,296.0" fill="#36c2a8" stroke="#1d4f58" stroke-width="1.6" stroke-dasharray="1.8 1.3"/><polygon points="470.3,290.2 480.9,293.8 474.5,315.8 463.9,312.2" fill="#36c2a8" stroke="#1d4f58" stroke-width="1.6" stroke-dasharray="1.8 1.3"/><polygon points="489.4,296.6 499.5,300.0 493.2,322.0 483.0,318.6" fill="#36c2a8" stroke="#1d4f58" stroke-width="1.6" stroke-dasharray="1.8 1.3"/><polygon points="506.5,302.3 511.8,304.1 505.4,326.1 500.1,324.3" fill="#36c2a8" stroke="#1d4f58" stroke-width="1.6" stroke-dasharray="1.8 1.3"/><polygon points="513.9,304.8 524.0,308.2 517.6,330.2 507.5,326.8" fill="#36c2a8" stroke="#1d4f58" stroke-width="1.6" stroke-dasharray="1.8 1.3"/><polygon points="528.0,309.5 538.6,313.1 532.3,335.1 521.6,331.5" fill="#36c2a8" stroke="#1d4f58" stroke-width="1.6" stroke-dasharray="1.8 1.3"/><polygon points="550.6,317.1 556.5,319.1 550.1,341.1 544.2,339.1" fill="#36c2a8" stroke="#1d4f58" stroke-width="1.6" stroke-dasharray="1.8 1.3"/><polygon points="563.9,321.6 569.8,323.5 563.4,345.5 557.5,343.6" fill="#36c2a8" stroke="#1d4f58" stroke-width="1.6" stroke-dasharray="1.8 1.3"/><polygon points="573.0,324.6 583.6,328.1 577.2,350.1 566.6,346.6" fill="#36c2a8" stroke="#1d4f58" stroke-width="1.6" stroke-dasharray="1.8 1.3"/><polygon points="591.0,330.6 596.4,332.4 590.0,354.4 584.7,352.6" fill="#36c2a8" stroke="#1d4f58" stroke-width="1.6" stroke-dasharray="1.8 1.3"/><polygon points="605.9,335.6 616.6,339.2 610.2,361.2 599.6,357.6" fill="#36c2a8" stroke="#1d4f58" stroke-width="1.6" stroke-dasharray="1.8 1.3"/><polygon points="635.9,345.7 646.6,349.2 640.2,371.2 629.6,367.7" fill="#36c2a8" stroke="#1d4f58" stroke-width="1.6" stroke-dasharray="1.8 1.3"/><polygon points="647.1,349.4 652.4,351.2 646.1,373.2 640.7,371.4" fill="#36c2a8" stroke="#1d4f58" stroke-width="1.6" stroke-dasharray="1.8 1.3"/><polygon points="661.0,354.0 666.3,355.8 659.9,377.8 654.6,376.0" fill="#36c2a8" stroke="#1d4f58" stroke-width="1.6" stroke-dasharray="1.8 1.3"/><polygon points="669.2,356.8 680.4,360.5 674.0,382.5 662.9,378.8" fill="#36c2a8" stroke="#1d4f58" stroke-width="1.6" stroke-dasharray="1.8 1.3"/><polygon points="687.9,363.0 700.1,367.1 693.7,389.1 681.5,385.0" fill="#36c2a8" stroke="#1d4f58" stroke-width="1.6" stroke-dasharray="1.8 1.3"/><polygon points="704.9,368.7 710.2,370.5 703.8,392.5 698.5,390.7" fill="#36c2a8" stroke="#1d4f58" stroke-width="1.6" stroke-dasharray="1.8 1.3"/><polygon points="712.6,371.3 722.7,374.7 716.3,396.7 706.2,393.3" fill="#36c2a8" stroke="#1d4f58" stroke-width="1.6" stroke-dasharray="1.8 1.3"/><polygon points="727.0,376.1 738.7,380.0 732.3,402.0 720.6,398.1" fill="#36c2a8" stroke="#1d4f58" stroke-width="1.6" stroke-dasharray="1.8 1.3"/><polygon points="748.5,383.3 753.8,385.1 747.5,407.1 742.1,405.3" fill="#36c2a8" stroke="#1d4f58" stroke-width="1.6" stroke-dasharray="1.8 1.3"/><polygon points="761.0,387.5 771.7,391.1 765.3,413.1 754.6,409.5" fill="#36c2a8" stroke="#1d4f58" stroke-width="1.6" stroke-dasharray="1.8 1.3"/><polygon points="809.2,403.6 815.5,405.8 809.2,427.8 802.8,425.6" fill="#36c2a8" stroke="#1d4f58" stroke-width="1.6" stroke-dasharray="1.8 1.3"/><polygon points="822.5,408.1 828.8,410.2 822.5,432.2 816.1,430.1" fill="#36c2a8" stroke="#1d4f58" stroke-width="1.6" stroke-dasharray="1.8 1.3"/><polygon points="452.2,282.0 456.5,283.4 450.1,305.4 445.9,304.0" fill="#6a50c8" stroke="#1d4f58" stroke-width="1.6" stroke-dasharray="1.8 1.3"/><polygon points="606.7,294.2 611.5,295.8 604.6,319.8 599.8,318.2" fill="#36c2a8" stroke="#1d4f58" stroke-width="1.6" stroke-dasharray="1.8 1.3"/><polygon points="613.7,296.5 624.0,300.0 617.1,324.0 606.7,320.5" fill="#36c2a8" stroke="#1d4f58" stroke-width="1.6" stroke-dasharray="1.8 1.3"/><polygon points="633.9,303.3 643.0,306.3 636.0,330.3 627.0,327.3" fill="#36c2a8" stroke="#1d4f58" stroke-width="1.6" stroke-dasharray="1.8 1.3"/><polygon points="650.3,308.8 655.1,310.4 648.1,334.4 643.4,332.8" fill="#36c2a8" stroke="#1d4f58" stroke-width="1.6" stroke-dasharray="1.8 1.3"/><polygon points="656.5,310.9 664.0,313.4 657.0,337.4 649.6,334.9" fill="#36c2a8" stroke="#1d4f58" stroke-width="1.6" stroke-dasharray="1.8 1.3"/><polygon points="671.4,315.8 678.3,318.1 671.3,342.1 664.4,339.8" fill="#36c2a8" stroke="#1d4f58" stroke-width="1.6" stroke-dasharray="1.8 1.3"/><polygon points="683.8,320.0 690.7,322.3 683.7,346.3 676.8,344.0" fill="#36c2a8" stroke="#1d4f58" stroke-width="1.6" stroke-dasharray="1.8 1.3"/><polygon points="700.6,325.6 705.4,327.2 698.5,351.2 693.7,349.6" fill="#36c2a8" stroke="#1d4f58" stroke-width="1.6" stroke-dasharray="1.8 1.3"/><polygon points="711.7,329.3 720.7,332.3 713.7,356.3 704.7,353.3" fill="#36c2a8" stroke="#1d4f58" stroke-width="1.6" stroke-dasharray="1.8 1.3"/><polygon points="739.7,338.7 746.7,341.0 739.7,365.0 732.8,362.7" fill="#36c2a8" stroke="#1d4f58" stroke-width="1.6" stroke-dasharray="1.8 1.3"/><polygon points="752.5,343.0 757.3,344.6 750.3,368.6 745.5,367.0" fill="#36c2a8" stroke="#1d4f58" stroke-width="1.6" stroke-dasharray="1.8 1.3"/><polygon points="766.8,347.8 776.9,351.1 770.0,375.1 759.9,371.8" fill="#36c2a8" stroke="#1d4f58" stroke-width="1.6" stroke-dasharray="1.8 1.3"/><polygon points="820.2,365.6 826.6,367.8 819.6,391.8 813.2,389.6" fill="#36c2a8" stroke="#1d4f58" stroke-width="1.6" stroke-dasharray="1.8 1.3"/><polygon points="833.5,370.1 839.9,372.2 832.9,396.2 826.5,394.1" fill="#36c2a8" stroke="#1d4f58" stroke-width="1.6" stroke-dasharray="1.8 1.3"/><polygon points="832.1,334.5 838.0,336.5 830.7,361.5 824.9,359.5" fill="#36c2a8" stroke="#1d4f58" stroke-width="1.6" stroke-dasharray="1.8 1.3"/><polygon points="845.4,339.0 851.3,340.9 844.0,365.9 838.2,364.0" fill="#36c2a8" stroke="#1d4f58" stroke-width="1.6" stroke-dasharray="1.8 1.3"/><polygon points="871.0,347.5 935.9,369.2 928.0,396.2 863.1,374.5" fill="#3ec7a6" stroke="#1d4f58" stroke-width="1.6" stroke-dasharray="1.8 1.3"/><polygon points="885.7,361.2 912.3,370.1 907.6,386.1 881.0,377.2" fill="#60e0e0" /><polygon points="862.7,379.9 921.3,399.4 913.1,427.4 854.6,407.9" fill="#38c8a8" stroke="#1d4f58" stroke-width="1.6" stroke-dasharray="1.8 1.3"/><polygon points="862.7,379.9 921.3,399.4 919.5,405.4 861.0,385.9" fill="#40e840" /><polygon points="848.7,420.1 914.7,442.2 906.6,470.2 840.6,448.1" fill="#38c0a8" stroke="#1d4f58" stroke-width="1.6" stroke-dasharray="1.8 1.3"/><polygon points="860.6,427.4 881.9,434.5 876.1,454.5 854.8,447.4" fill="#5ee0e0" /><line x1="390.5" y1="257.5" x2="920.4" y2="442.5" stroke="#3a7a3a" stroke-width="1"/><line x1="391.3" y1="254.5" x2="921.3" y2="439.5" stroke="#3a7a3a" stroke-width="1"/><polygon points="454.4,318.9 773.6,425.7 771.0,434.7 451.8,327.9" fill="#3fe83f" /><polygon points="451.8,327.9 771.0,434.7 769.5,439.7 450.3,332.9" fill="#d8f6d2" /><polygon points="450.3,332.9 769.5,439.7 767.8,445.7 448.6,338.9" fill="#46e060" /><polygon points="448.6,338.9 767.8,445.7 762.8,462.7 443.6,355.9" fill="#36c6ae" /><polygon points="447.7,341.9 508.3,362.2 504.3,376.2 443.6,355.9" fill="#3ccab4" /><polygon points="512.4,360.3 552.3,373.6 547.4,390.6 507.5,377.3" fill="#e27ee8" /><polygon points="552.3,373.6 566.7,378.4 561.7,395.4 547.4,390.6" fill="#7ab080" /><polygon points="569.5,394.8 636.0,417.0 634.6,422.0 568.1,399.8" fill="#d0a040" /><polygon points="642.8,403.9 693.3,420.8 688.4,437.8 637.8,420.9" fill="#e27ee8" /><polygon points="693.3,420.8 709.3,426.1 704.3,443.1 688.4,437.8" fill="#a0e0a0" /><polygon points="452.5,317.2 457.9,319.0 445.7,361.0 440.4,359.2" fill="#6a22c6" /><polygon points="513.2,337.5 518.5,339.3 506.3,381.3 501.0,379.5" fill="#6a22c6" /><polygon points="573.3,357.6 578.6,359.4 566.4,401.4 561.1,399.6" fill="#6a22c6" /><polygon points="644.1,381.3 649.4,383.1 637.2,425.1 631.9,423.3" fill="#6a22c6" /><polygon points="716.9,405.7 722.3,407.5 710.1,449.5 704.8,447.7" fill="#6a22c6" /><polygon points="378.9,313.4 419.9,327.1 415.2,343.1 374.3,329.4" fill="#48a868" /><polygon points="382.1,326.6 398.1,331.9 396.6,336.9 380.7,331.6" fill="#90e0c0" /><polygon points="419.3,329.1 429.9,332.7 425.3,348.7 414.7,345.1" fill="#e07ee0" /><polygon points="833.1,462.1 862.3,471.9 856.2,492.9 827.0,483.1" fill="#e27ee8" /><polygon points="863.2,468.9 903.1,482.2 896.4,505.2 856.5,491.9" fill="#4cb478" stroke="#1d4f58" stroke-width="1.6" stroke-dasharray="1.8 1.3"/><polygon points="881.5,476.1 883.1,476.6 877.0,497.6 875.4,497.1" fill="#a0f0a0" /><polygon points="799.5,450.9 805.4,452.8 798.7,475.8 792.9,473.9" fill="#36c2a8" stroke="#1d4f58" stroke-width="1.6" stroke-dasharray="1.8 1.3"/><polygon points="816.3,456.5 822.2,458.4 815.5,481.4 809.6,479.5" fill="#36c2a8" stroke="#1d4f58" stroke-width="1.6" stroke-dasharray="1.8 1.3"/><text x="0" y="0" font-size="19" font-family="Liberation Sans" fill="#2a2a2a" transform="translate(790,465) rotate(-90)">1700</text><text x="751" y="527" font-size="18" font-family="Liberation Sans" fill="#7a6a7a">38</text><text x="772" y="527" font-size="17" font-family="Liberation Sans" fill="#8a7a8a">2</text><text x="0" y="0" font-size="15" font-family="Liberation Sans" fill="#7a6a7a" transform="translate(798,540) rotate(-90)">600</text><text x="0" y="0" font-size="17" font-family="Liberation Sans" fill="#8a7070" transform="translate(444,408) rotate(-90)">100</text><path d="M366 657 L316 641" stroke="#d81818" stroke-width="5.5" stroke-linecap="round"/><path d="M309 638 L324 632 L321 647z" fill="#d81818"/><path d="M369 657 L393 608" stroke="#4488e0" stroke-width="4"/><path d="M393 598 L399 613 L386 610z" fill="#4488e0"/><circle cx="366" cy="664" r="6" fill="#30e030"/><text x="395" y="609" font-size="15" font-family="Liberation Sans" fill="#9a9ab8">Z</text><text x="339" y="665" font-size="13" font-family="Liberation Sans" fill="#aaa">Y</text><path d="M809 270 L809 291 L814 286 L818 294 L821 293 L817 285 L823 285z" fill="#fff" stroke="#000" stroke-width="0.8"/></g></g></svg>
</body></html>
